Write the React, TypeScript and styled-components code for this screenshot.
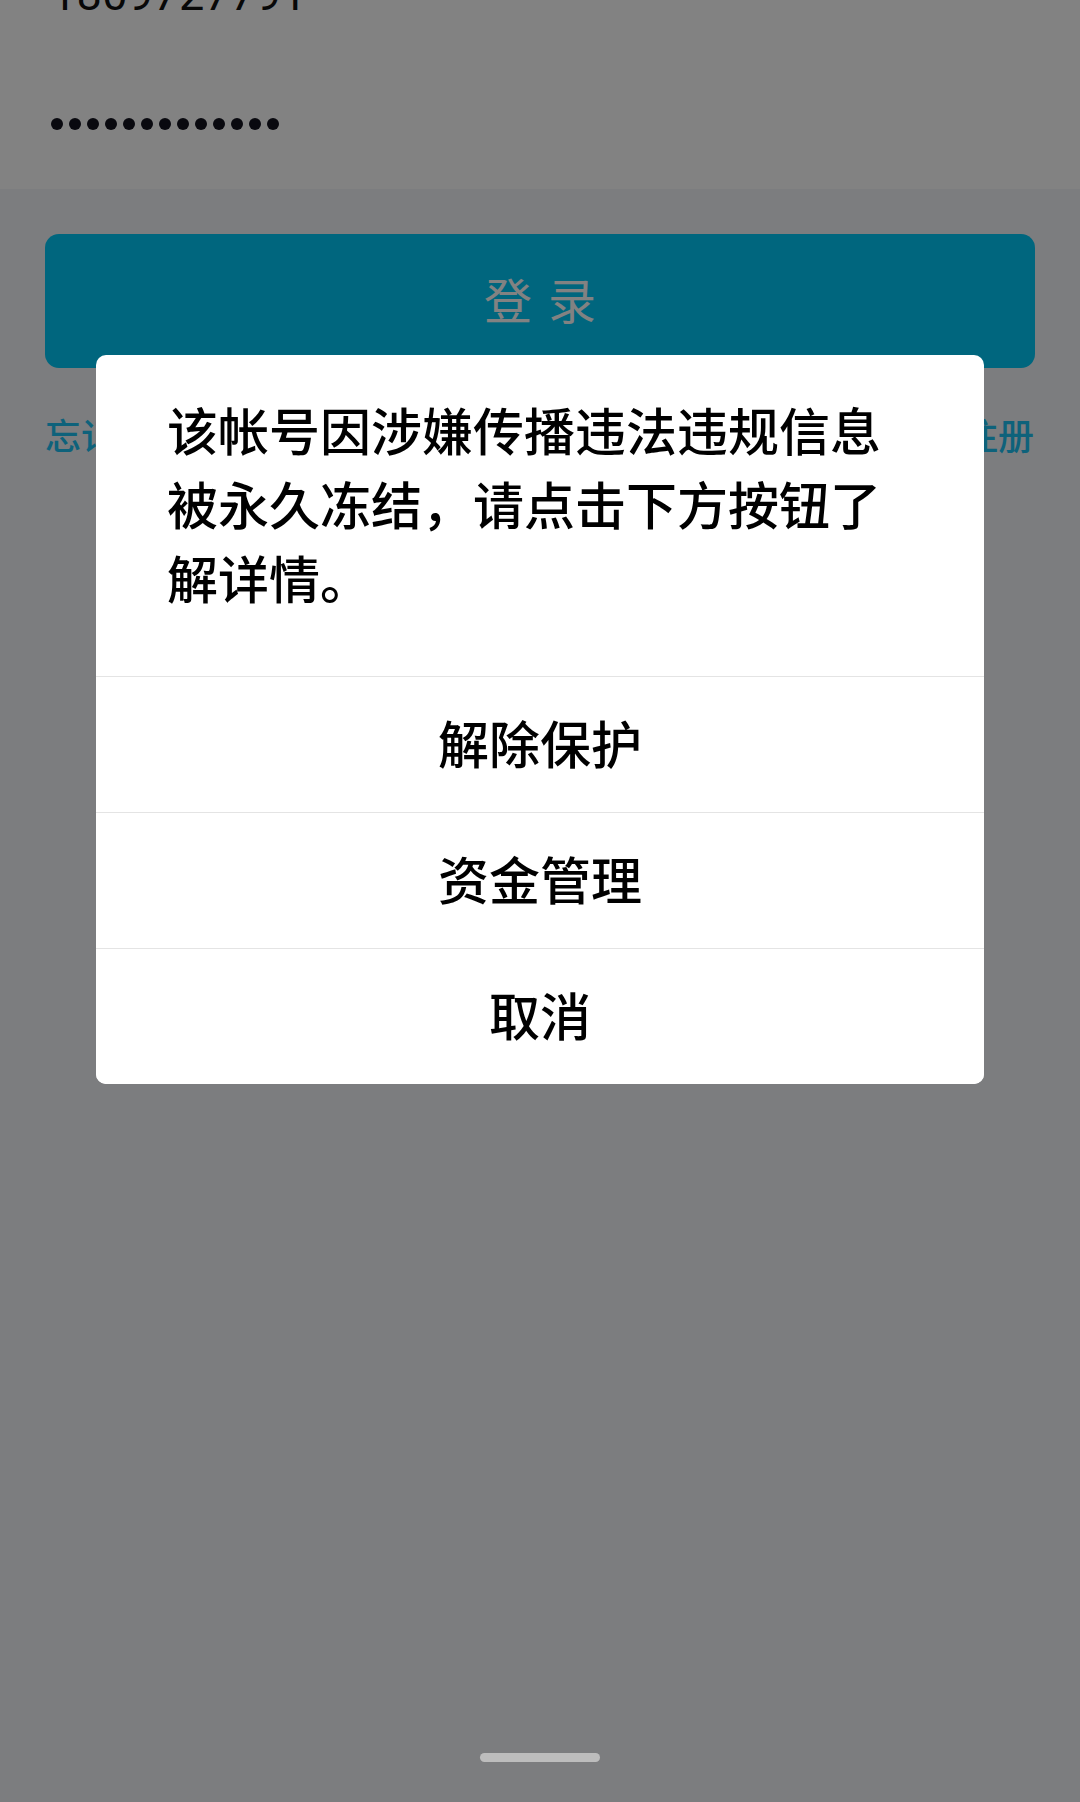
import React from "react";
import styled, { createGlobalStyle } from "styled-components";

const GlobalStyle = createGlobalStyle`
  html, body {
    margin: 0;
    padding: 0;
    background: #f3f5f9;
  }
  body {
    font-family: "Noto Sans CJK SC", "Noto Sans", Roboto, sans-serif;
    overflow: hidden;
  }
  * { box-sizing: border-box; }
`;

const Page = styled.div`
  min-height: 100vh;
  background: #f3f5f9;
  display: flex;
  flex-direction: column;
`;

const Form = styled.div`
  background: #ffffff;
  margin-top: -71px;
  display: flex;
  flex-direction: column;
`;

const InputRow = styled.div`
  height: 130px;
  display: flex;
  align-items: center;
  padding-left: 51px;
`;

const PhoneText = styled.span`
  font-family: Roboto, "Noto Sans", sans-serif;
  font-size: 45px;
  color: #111111;
  letter-spacing: 0.3px;
`;

const Dots = styled.div`
  display: flex;
  gap: 6px;
`;

const Dot = styled.span`
  width: 12px;
  height: 12px;
  border-radius: 50%;
  background: #12121e;
`;

const LoginButton = styled.button`
  margin: 45px 45px 0;
  height: 134px;
  border: none;
  border-radius: 14px;
  background: #00c8f7;
  color: #ffffff;
  font-family: "Noto Sans CJK SC", sans-serif;
  font-size: 48px;
  letter-spacing: 16px;
  padding: 0 0 6px 16px;
  display: flex;
  align-items: center;
  justify-content: center;
`;

const LinkRow = styled.div`
  margin: 41px 46px 0 45px;
  display: flex;
  justify-content: space-between;
  line-height: 50px;
`;

const Link = styled.span`
  font-family: "Noto Sans CJK SC", sans-serif;
  font-size: 36px;
  font-weight: 500;
  color: #1cc0f2;
`;

const Overlay = styled.div`
  position: fixed;
  inset: 0;
  background: rgba(0, 0, 0, 0.49);
  display: flex;
  flex-direction: column;
  align-items: center;
  padding-top: 355px;
`;

const Dialog = styled.div`
  width: 888px;
  background: #ffffff;
  border-radius: 10px;
  overflow: hidden;
  display: flex;
  flex-direction: column;
`;

const Message = styled.p`
  margin: 0;
  padding: 37px 71px 62px;
  font-family: "Noto Sans CJK SC", sans-serif;
  font-size: 51px;
  font-weight: 500;
  line-height: 74px;
  color: #000000;
`;

const Action = styled.button`
  height: 136px;
  border: none;
  border-top: 1px solid #e4e4e4;
  background: #ffffff;
  font-family: "Noto Sans CJK SC", sans-serif;
  font-size: 51px;
  font-weight: 500;
  color: #000000;
  display: flex;
  align-items: center;
  justify-content: center;
  padding: 0 0 6px;
`;

const HomeIndicator = styled.div`
  margin-top: auto;
  margin-bottom: 40px;
  width: 120px;
  height: 9px;
  border-radius: 5px;
  background: #bdbdbd;
`;

const actions = ["解除保护", "资金管理", "取消"];

export default function App() {
  return (
    <>
      <GlobalStyle />
      <Page>
        <Form>
          <InputRow>
            <PhoneText>1809727791</PhoneText>
          </InputRow>
          <InputRow>
            <Dots>
              {Array.from({ length: 13 }).map((_, i) => (
                <Dot key={i} />
              ))}
            </Dots>
          </InputRow>
        </Form>
        <LoginButton>登录</LoginButton>
        <LinkRow>
          <Link>忘记密码</Link>
          <Link>快速注册</Link>
        </LinkRow>
      </Page>
      <Overlay>
        <Dialog>
          <Message>
            该帐号因涉嫌传播违法违规信息被永久冻结，请点击下方按钮了解详情。
          </Message>
          {actions.map((a) => (
            <Action key={a}>{a}</Action>
          ))}
        </Dialog>
        <HomeIndicator />
      </Overlay>
    </>
  );
}
